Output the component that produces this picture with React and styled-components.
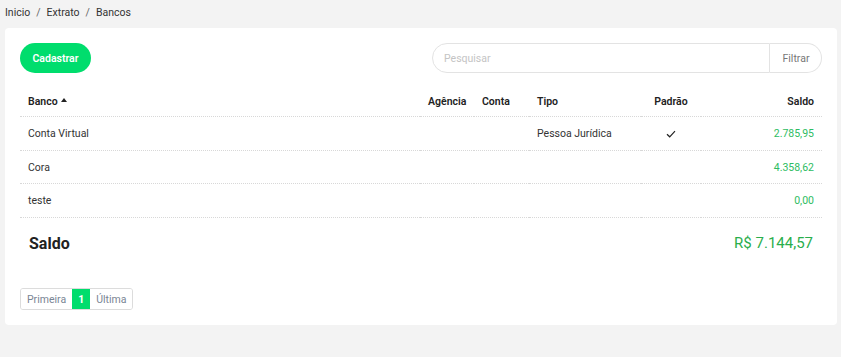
import React from 'react';
import styled, { createGlobalStyle } from 'styled-components';

const GlobalStyle = createGlobalStyle`
  html, body {
    margin: 0;
    padding: 0;
    background: #f3f3f3;
    font-family: Roboto, Inter, "Liberation Sans", sans-serif;
    color: #333;
  }
  * { box-sizing: border-box; }
`;

const Page = styled.div`
  padding: 0 4px 0 5px;
  height: 357px;
`;

const Breadcrumb = styled.nav`
  height: 28px;
  display: flex;
  align-items: flex-start;
  padding-top: 6px;
  font-size: 10.5px;
  color: #333;
  gap: 6px;
`;

const Sep = styled.span`
  color: #666;
`;

const Card = styled.div`
  background: #fff;
  border-radius: 4px;
  padding: 15px 15px 15px;
`;

const Toolbar = styled.div`
  display: flex;
  justify-content: space-between;
  align-items: center;
  height: 30px;
`;

const PrimaryButton = styled.button`
  height: 30px;
  width: 71px;
  padding: 0;
  border: none;
  border-radius: 15px;
  background: #00dd6d;
  color: #fff;
  font-family: inherit;
  font-size: 10.5px;
  font-weight: 600;
`;

const Search = styled.div`
  display: flex;
  width: 390px;
  height: 30px;
`;

const SearchInput = styled.input`
  flex: 1;
  height: 30px;
  border: 1px solid #e3e3e3;
  border-radius: 15px 0 0 15px;
  padding: 0 11px;
  font-family: inherit;
  font-size: 10.5px;
  outline: none;
  &::placeholder { color: #c4c4c4; }
`;

const FilterButton = styled.button`
  width: 52px;
  height: 30px;
  border: 1px solid #e3e3e3;
  border-left: none;
  border-radius: 0 15px 15px 0;
  background: #fff;
  color: #777;
  font-family: inherit;
  font-size: 10.5px;
  padding: 0 0 0 1px;
`;

const Grid = styled.div`
  display: grid;
  grid-template-columns: 400px 54px 55px 112px 60px 1fr;
  margin-top: 17px;
`;

const HeadCell = styled.div`
  height: 27px;
  padding: 0 8px 4px;
  display: flex;
  align-items: center;
  justify-content: ${(p) => p.$align || 'flex-start'};
  font-size: 10.5px;
  font-weight: 600;
  color: #222;
  border-bottom: 1px dotted #d8d8d8;
`;

const Cell = styled.div`
  height: ${(p) => p.$h || 34}px;
  padding: 0 8px;
  display: flex;
  align-items: center;
  justify-content: ${(p) => p.$align || 'flex-start'};
  font-size: 10.5px;
  color: ${(p) => (p.$money ? '#2ebc62' : '#333')};
  border-bottom: 1px dotted #d8d8d8;
`;

const Caret = styled.span`
  display: inline-block;
  width: 0;
  height: 0;
  margin-left: 3px;
  margin-top: -2px;
  border-left: 3.5px solid transparent;
  border-right: 3.5px solid transparent;
  border-bottom: 4px solid #222;
`;

const TotalRow = styled.div`
  display: flex;
  justify-content: space-between;
  align-items: center;
  height: 54px;
  padding: 0 9px 4px 9px;
`;

const TotalLabel = styled.span`
  font-size: 16px;
  font-weight: 700;
  color: #222;
`;

const TotalValue = styled.span`
  font-size: 15px;
  font-weight: 400;
  color: #2aae4c;
`;

const Pager = styled.div`
  display: flex;
  width: fit-content;
  margin-top: 16px;
  border: 1px solid #dcdcdc;
  border-radius: 3px;
  overflow: hidden;
  height: 22px;
`;

const PageItem = styled.span`
  display: flex;
  align-items: center;
  padding: 0 6px;
  font-size: 10.5px;
  font-weight: ${(p) => (p.$active ? 700 : 400)};
  color: ${(p) => (p.$active ? '#fff' : '#7a8594')};
  background: ${(p) => (p.$active ? '#00dd6d' : '#fff')};
`;

const Check = () => (
  <svg width="10" height="8" viewBox="0 0 10 8" fill="none">
    <path d="M1 4.2L3.7 6.8L9 1.2" stroke="#222" strokeWidth="1.2" />
  </svg>
);

const banks = [
  { name: 'Conta Virtual', tipo: 'Pessoa Jurídica', padrao: true, saldo: '2.785,95', h: 34 },
  { name: 'Cora', tipo: '', padrao: false, saldo: '4.358,62', h: 33 },
  { name: 'teste', tipo: '', padrao: false, saldo: '0,00', h: 34 },
];

export default function App() {
  return (
    <Page>
      <GlobalStyle />
      <Breadcrumb>
        <span>Inicio</span>
        <Sep>/</Sep>
        <span>Extrato</span>
        <Sep>/</Sep>
        <span>Bancos</span>
      </Breadcrumb>
      <Card>
        <Toolbar>
          <PrimaryButton>Cadastrar</PrimaryButton>
          <Search>
            <SearchInput placeholder="Pesquisar" />
            <FilterButton>Filtrar</FilterButton>
          </Search>
        </Toolbar>
        <Grid>
          <HeadCell>
            Banco <Caret />
          </HeadCell>
          <HeadCell>Agência</HeadCell>
          <HeadCell>Conta</HeadCell>
          <HeadCell>Tipo</HeadCell>
          <HeadCell $align="center">Padrão</HeadCell>
          <HeadCell $align="flex-end">Saldo</HeadCell>
          {banks.map((b) => (
            <React.Fragment key={b.name}>
              <Cell $h={b.h}>{b.name}</Cell>
              <Cell $h={b.h} />
              <Cell $h={b.h} />
              <Cell $h={b.h}>{b.tipo}</Cell>
              <Cell $h={b.h} $align="center">{b.padrao && <Check />}</Cell>
              <Cell $h={b.h} $align="flex-end" $money>
                {b.saldo}
              </Cell>
            </React.Fragment>
          ))}
        </Grid>
        <TotalRow>
          <TotalLabel>Saldo</TotalLabel>
          <TotalValue>R$ 7.144,57</TotalValue>
        </TotalRow>
        <Pager>
          <PageItem>Primeira</PageItem>
          <PageItem $active>1</PageItem>
          <PageItem>Última</PageItem>
        </Pager>
      </Card>
    </Page>
  );
}
